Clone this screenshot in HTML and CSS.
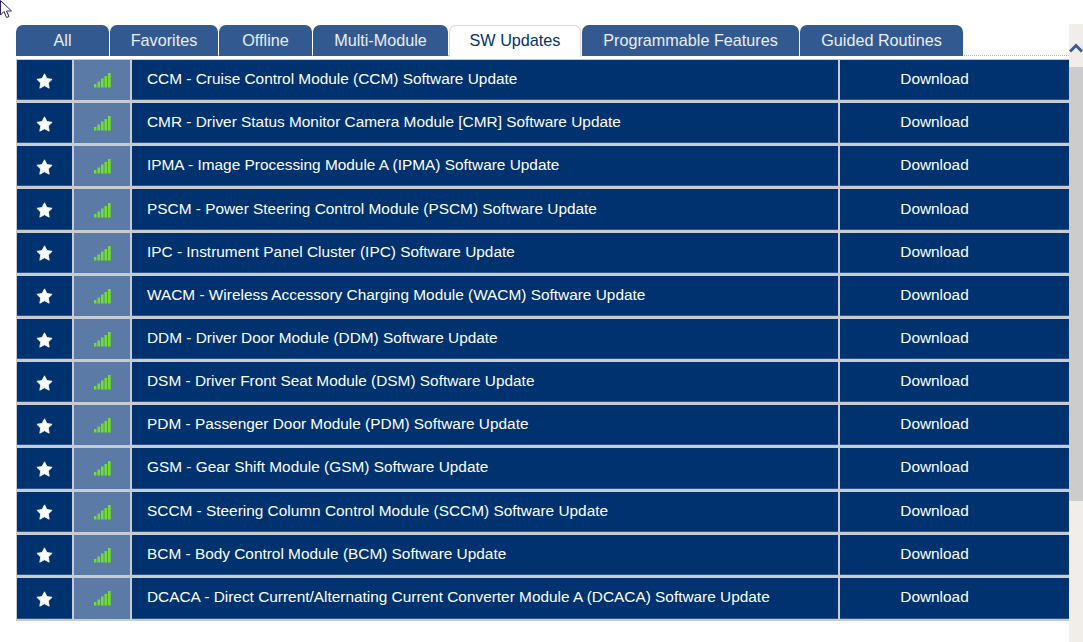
FILE: index.html
```html
<!DOCTYPE html>
<html lang="en">
<head>
    <meta charset="UTF-8">
    <title>SW Updates</title>
    <link rel="stylesheet" href="styles.css">
</head>
<body>
    <svg class="cursor" width="13" height="20" viewBox="0 0 13 20"><path d="M0.5 0.5V15L4 11.5L6.5 17.5L9 16.5L6.5 11H11.5Z" fill="#fff" stroke="#2a2570"/></svg>
    <div class="page">
        <div class="main">
            <div class="tabs">
                <a class="tab t-all">All</a>
                <a class="tab t-fav">Favorites</a>
                <a class="tab t-off">Offline</a>
                <a class="tab t-multi">Multi-Module</a>
                <a class="tab t-sw active">SW Updates</a>
                <a class="tab t-prog">Programmable Features</a>
                <a class="tab t-guide">Guided Routines</a>
            </div>
            <table class="list">
                <tbody id="rows"></tbody>
            </table>
        </div>
        <div class="scrollbar">
            <svg class="arrow" width="14" height="10" viewBox="0 0 14 10"><path d="M1 8.5L7 2.5L13 8.5" fill="none" stroke="#3c5a92" stroke-width="3"/></svg>
            <div class="thumb"></div>
        </div>
    </div>
    <script src="rows.js"></script>
</body>
</html>
```
FILE: styles.css
```css
html, body {
    margin: 0;
    padding: 0;
    height: 100%;
    overflow: hidden;
    background-color: #ffffff;
}
body {
    font-family: "Liberation Sans", Arial, sans-serif;
    font-size: 15.4px;
    color: #ffffff;
}
.cursor {
    position: absolute;
    left: 0;
    top: 0;
}
.page {
    display: flex;
    height: 642px;
    padding-top: 24px;
    box-sizing: border-box;
}
.main {
    width: 1053px;
    margin-left: 16px;
}
.tabs {
    display: flex;
    height: 32px;
    padding-top: 1px;
    box-sizing: border-box;
    border-bottom: 1px dotted #bbbbbb;
    margin-bottom: 3px;
}
.tab {
    height: 31px;
    margin-right: 1px;
    background-color: #335a90;
    color: #e8edf4;
    font-size: 16.2px;
    line-height: 31px;
    text-align: center;
    border-radius: 7px 7px 0 0;
    flex: none;
}
.t-all { width: 93px; }
.t-fav { width: 108px; }
.t-off { width: 93px; }
.t-multi { width: 135px; }
.t-sw { width: 132px; }
.t-prog { width: 217px; }
.t-guide { width: 163px; margin-right: 0; }
.tab.active {
    height: 32px;
    background-color: #ffffff;
    color: #00326f;
    box-shadow: inset 0 1px 0 #dddddd, inset 1px 0 0 #dddddd, inset -1px 0 0 #dddddd;
}
.list {
    width: 1053px;
    border-collapse: separate;
    border-spacing: 0;
    table-layout: fixed;
    border-left: 1px solid #c4c8cd;
    border-top: 1px solid #c4c8cd;
}
.list td {
    height: 43.17px;
    padding: 0;
    box-sizing: border-box;
    background-color: #00326f;
    border-bottom: 3px solid #c8cbd0;
    border-right: 2px solid #c8cbd0;
    box-shadow: inset 0 -1px 0 #2f5488;
}
.list tr:last-child td {
    border-bottom-width: 2px;
}
.list td:last-child {
    border-right: none;
}
.c-star { width: 57px; }
.c-signal { width: 58px; }
.c-name { width: 708px; }
.list td.c-signal {
    background-color: #5b7ba6;
    box-shadow: none;
}
.list td.c-name { padding-left: 15px; padding-bottom: 2px; }
.list td.c-action { text-align: center; padding-right: 40px; padding-bottom: 2px; }
.c-star svg, .c-signal svg { display: block; margin: 1px auto 0; }
.scrollbar {
    width: 14px;
    background-color: #f1ede8;
    display: flex;
    flex-direction: column;
}
.arrow {
    display: block;
    margin-top: 19px;
    margin-bottom: 14px;
}
.thumb {
    height: 434px;
    background-color: #cccccc;
}
```
FILE: rows.js
```js
const modules = [
    "CCM - Cruise Control Module (CCM) Software Update",
    "CMR - Driver Status Monitor Camera Module [CMR] Software Update",
    "IPMA - Image Processing Module A (IPMA) Software Update",
    "PSCM - Power Steering Control Module (PSCM) Software Update",
    "IPC - Instrument Panel Cluster (IPC) Software Update",
    "WACM - Wireless Accessory Charging Module (WACM) Software Update",
    "DDM - Driver Door Module (DDM) Software Update",
    "DSM - Driver Front Seat Module (DSM) Software Update",
    "PDM - Passenger Door Module (PDM) Software Update",
    "GSM - Gear Shift Module (GSM) Software Update",
    "SCCM - Steering Column Control Module (SCCM) Software Update",
    "BCM - Body Control Module (BCM) Software Update",
    "DCACA - Direct Current/Alternating Current Converter Module A (DCACA) Software Update"
];

const star = '<svg class="star" width="17" height="16" viewBox="0 0 17 16"><path d="M8.5 .8l2.4 4.7 5.2.8-3.8 3.7.9 5.2-4.7-2.5-4.7 2.5.9-5.2L.9 6.3l5.2-.8z" fill="#fff" stroke="#fff" stroke-width=".8" stroke-linejoin="round"/></svg>';
const signal = '<svg width="17" height="15" viewBox="0 0 17 15"><g fill="#70e02c"><rect x="0" y="11" width="2.4" height="3.5"/><rect x="3.5" y="8.5" width="2.6" height="6"/><rect x="7" y="5.5" width="2.6" height="9"/><rect x="10.5" y="3" width="2.6" height="11.5"/><rect x="14" y="0" width="2.6" height="14.5"/></g></svg>';

const tbody = document.getElementById("rows");
modules.forEach(name => {
    const tr = document.createElement("tr");
    tr.innerHTML = `<td class="c-star">${star}</td><td class="c-signal">${signal}</td><td class="c-name">${name}</td><td class="c-action">Download</td>`;
    tbody.appendChild(tr);
});
```
